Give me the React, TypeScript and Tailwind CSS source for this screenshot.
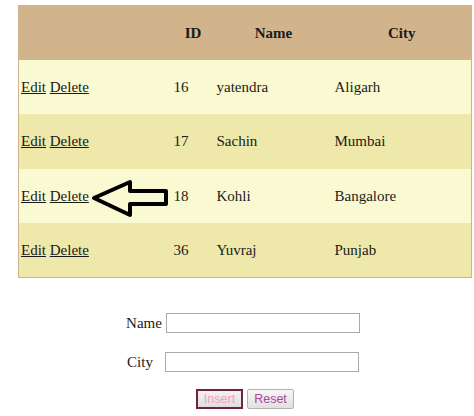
import React from "react";

const rows = [
  { id: 16, name: "yatendra", city: "Aligarh" },
  { id: 17, name: "Sachin", city: "Mumbai" },
  { id: 18, name: "Kohli", city: "Bangalore" },
  { id: 36, name: "Yuvraj", city: "Punjab" },
];

export default function App() {
  return (
    <div className="relative w-[474px] h-[416px] bg-white text-[15px] text-[#1a1a1a] font-['Liberation_Serif','Times_New_Roman',serif]">
      <div className="pt-[5px] pl-[18px]">
        <table className="table-fixed border-collapse border border-[#cdb48e] w-[453px]">
          <colgroup>
            <col className="w-[153px]" />
            <col className="w-[43px]" />
            <col className="w-[118px]" />
            <col className="w-[139px]" />
          </colgroup>
          <thead>
            <tr className="h-[54px] bg-[#d2b48c]">
              <th className="p-[2px] font-bold"></th>
              <th className="p-[2px] font-bold text-center">ID</th>
              <th className="p-[2px] font-bold text-center">Name</th>
              <th className="p-[2px] font-bold text-center">City</th>
            </tr>
          </thead>
          <tbody>
            {rows.map((r, i) => (
              <tr
                key={r.id}
                className={
                  i % 2 === 0 ? "h-[54.5px] bg-[#fafad2]" : "h-[54.5px] bg-[#eee8aa]"
                }
              >
                <td className="px-[2px] align-middle whitespace-nowrap">
                  <a className="underline text-[#1a1a1a]">Edit</a>{" "}
                  <a className="underline text-[#1a1a1a]">Delete</a>
                </td>
                <td className="px-[2px] align-middle">{r.id}</td>
                <td className="px-[2px] align-middle">{r.name}</td>
                <td className="px-[2px] align-middle">{r.city}</td>
              </tr>
            ))}
          </tbody>
        </table>
      </div>

      <div className="mt-[35px] flex flex-col items-center">
        <div className="flex items-center h-[20px] ml-[12px]">
          <label className="mr-[4px]">Name</label>
          <input className="w-[194px] h-[20px] border border-[#a9a9a9] bg-white" />
        </div>
        <div className="flex items-center h-[20px] mt-[19px] ml-[12px]">
          <label className="mr-[12px]">City</label>
          <input className="w-[194px] h-[20px] border border-[#a9a9a9] bg-white" />
        </div>
        <div className="flex items-center gap-[4px] mt-[17px] font-['Liberation_Sans',Arial,sans-serif] text-[12.5px] ml-[16px]">
          <button className="w-[47px] h-[20px] border-2 border-[#6e2247] bg-gradient-to-b from-[#f2f2f2] to-[#dedede] text-[#f3a2bd] leading-none">
            Insert
          </button>
          <button className="w-[47px] h-[20px] border border-[#b3b3b3] rounded-[2px] bg-gradient-to-b from-[#f6f6f6] to-[#e1e1e1] text-[#ad4592] leading-none">
            Reset
          </button>
        </div>
      </div>

      <svg
        className="absolute left-[88px] top-[176px] pointer-events-none"
        width="84"
        height="46"
        viewBox="0 0 84 46"
      >
        <polygon
          points="6,22 42,6 42,15 78,15 78,28 42,28 42,39"
          fill="none"
          stroke="#000"
          strokeWidth="4"
          strokeLinejoin="round"
        />
      </svg>
    </div>
  );
}
